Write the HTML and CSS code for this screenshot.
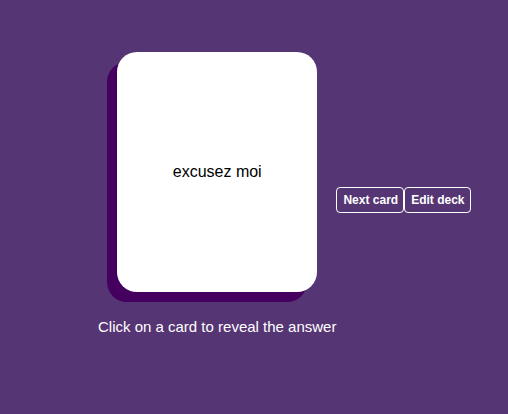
FILE: index.html
```html
<!DOCTYPE html>
<html>
<head>
<meta charset="utf-8">
<link rel="stylesheet" href="styles.css">
</head>
<body>
<div class="app">
  <div class="deck">
    <div class="card"><span class="word">excusez moi</span></div>
    <p class="hint">Click on a card to reveal the answer</p>
  </div>
  <div class="actions">
    <button class="btn">Next card</button><button class="btn">Edit deck</button>
  </div>
</div>
</body>
</html>
```
FILE: styles.css
```css
html, body {
  margin: 0;
  padding: 0;
  height: 100%;
  background: #563574;
  font-family: "Liberation Sans", Arial, sans-serif;
}
.app {
  display: flex;
  align-items: flex-start;
  padding: 52px 0 0 98px;
}
.deck {
  display: flex;
  flex-direction: column;
  align-items: center;
}
.card {
  width: 200px;
  height: 240px;
  background: #fff;
  border-radius: 20px;
  box-shadow: -10px 10px 0 #45005f;
  display: flex;
  align-items: center;
  justify-content: center;
  cursor: pointer;
}
.word {
  font-size: 16px;
  color: #000;
}
.hint {
  margin: 26px 0 0;
  color: #fff;
  font-size: 15px;
  line-height: 18px;
}
.actions {
  display: flex;
  margin-top: 135px;
}
.btn {
  background: transparent;
  color: #fff;
  border: 1px solid #fff;
  border-radius: 4px;
  font-family: "Liberation Sans", Arial, sans-serif;
  font-weight: bold;
  font-size: 12px;
  line-height: 14px;
  padding: 5px 5px 5px 6px;
  margin: 0;
  cursor: pointer;
}
```
